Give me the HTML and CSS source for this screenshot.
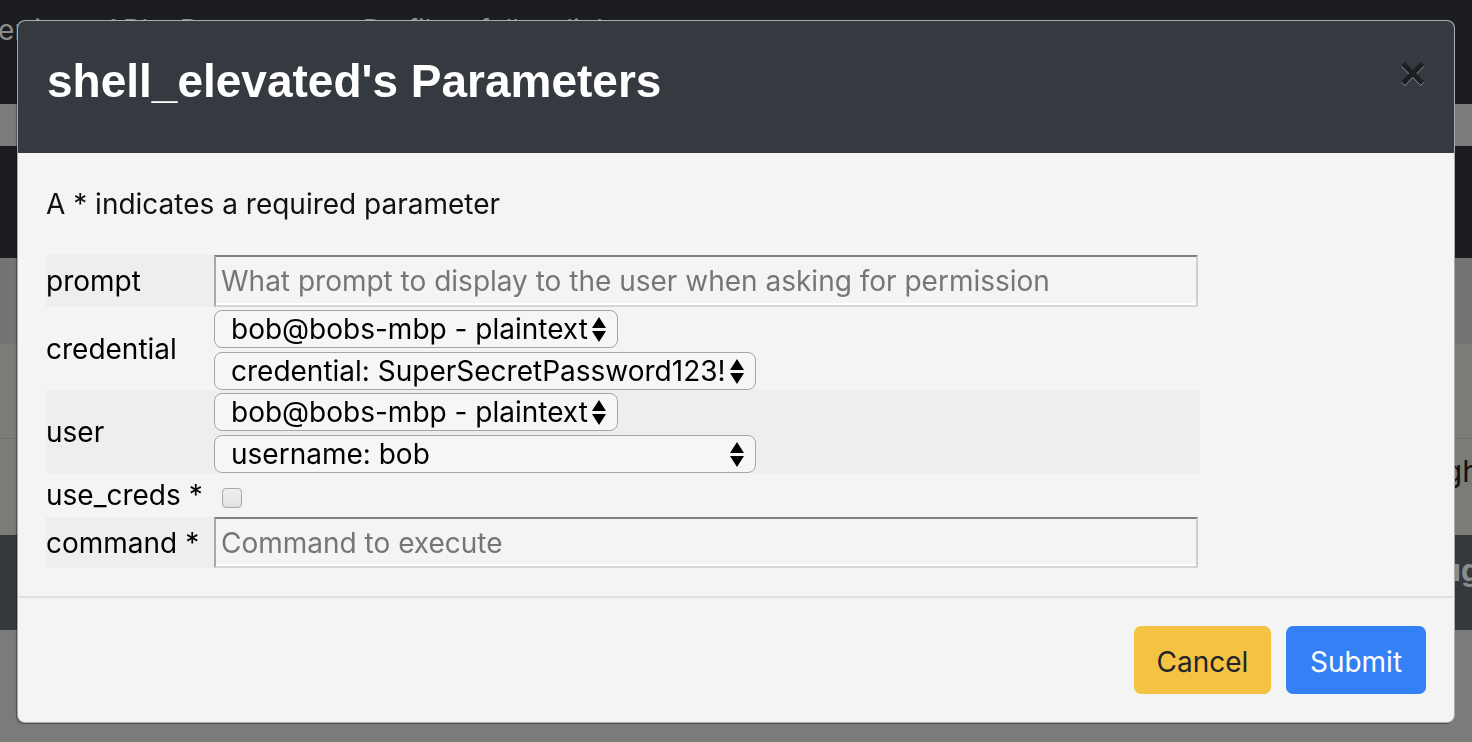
FILE: index.html
```html
<!DOCTYPE html>
<html lang="en">
<head>
<meta charset="utf-8">
<title>shell_elevated's Parameters</title>
<link rel="stylesheet" href="styles.css">
</head>
<body>
<div class="page">
  <div class="band band-top"><div class="nav-text">Properties&nbsp;&nbsp;&nbsp;&nbsp;API&nbsp;&nbsp;&nbsp;&nbsp;Parameters&nbsp;&nbsp;&nbsp;&nbsp;Profile&nbsp;&nbsp;&nbsp;&nbsp;follow link</div></div>
  <div class="band band-gray"></div>
  <div class="band band-dark"></div>
  <div class="band band-mid"></div>
  <div class="band band-green"></div>
  <div class="band band-green band-text band-text-a"><span class="right-text">through</span></div>
  <div class="band band-slate band-text band-text-b"><span class="right-text bold">Plug</span></div>
  <div class="band band-bottom"></div>
</div>

<div class="modal" role="dialog">
  <div class="modal-header">
    <h4 class="modal-title">shell_elevated's Parameters</h4>
    <button class="close" type="button" aria-label="Close">×</button>
  </div>
  <div class="modal-body">
    <p class="hint">A * indicates a required parameter</p>
    <table class="params">
      <tr class="row-prompt">
        <td class="label">prompt</td>
        <td class="field"><input class="text-input" type="text" placeholder="What prompt to display to the user when asking for permission"></td>
      </tr>
      <tr class="row-select">
        <td class="label">credential</td>
        <td class="field">
          <div class="select-stack">
            <select class="select short"><option>bob@bobs-mbp - plaintext</option></select>
            <select class="select long"><option>credential: SuperSecretPassword123!</option></select>
          </div>
        </td>
      </tr>
      <tr class="row-select">
        <td class="label">user</td>
        <td class="field">
          <div class="select-stack">
            <select class="select short"><option>bob@bobs-mbp - plaintext</option></select>
            <select class="select long"><option>username: bob</option></select>
          </div>
        </td>
      </tr>
      <tr class="row-check">
        <td class="label">use_creds *</td>
        <td class="field"><input class="checkbox" type="checkbox"></td>
      </tr>
      <tr class="row-command">
        <td class="label">command *</td>
        <td class="field"><input class="text-input" type="text" placeholder="Command to execute"></td>
      </tr>
    </table>
  </div>
  <div class="modal-footer">
    <button class="btn btn-cancel" type="button">Cancel</button>
    <button class="btn btn-submit" type="button">Submit</button>
  </div>
</div>
</body>
</html>
```
FILE: styles.css
```css
html, body {
  margin: 0;
  padding: 0;
  height: 100%;
}

body {
  font-family: Inter, "Noto Sans", "DejaVu Sans", sans-serif;
  background: #7b7b7b;
  overflow: hidden;
}

/* background page (dimmed) */
.page {
  display: flex;
  flex-direction: column;
}

.band {
  overflow: hidden;
}

.band-top {
  height: 104px;
  background: #1c1d20;
}

.nav-text {
  margin: 13px 0 0 -64px;
  font-size: 28px;
  color: #8c8c8c;
  white-space: nowrap;
}

.band-gray {
  height: 42px;
  background: #7b7b7b;
}

.band-dark {
  height: 112px;
  background: #1c1d20;
}

.band-mid {
  height: 86px;
  background: #737373;
}

.band-green {
  height: 94px;
  background: #7b7c77;
  border-bottom: 1px solid #6e6f6b;
}

.band-green.band-text {
  height: 96px;
  border-bottom: none;
}

.band-slate {
  height: 95px;
  background: #35393c;
}

.band-bottom {
  height: 112px;
  background: #7b7b7b;
}

.band-text {
  display: flex;
  align-items: flex-start;
  justify-content: flex-end;
}

.band-text-a {
  padding-top: 14px;
  box-sizing: border-box;
}

.band-text-b {
  padding-top: 17px;
  box-sizing: border-box;
}

.right-text {
  margin-right: -8px;
  font-size: 30px;
  color: #111;
  white-space: nowrap;
}

.right-text.bold {
  font-weight: 700;
  color: #8a8c8e;
  margin-right: -8px;
}

/* modal */
.modal {
  position: fixed;
  left: 17px;
  top: 20px;
  width: 1438px;
  height: 703px;
  box-sizing: border-box;
  border: 1px solid rgba(0, 0, 0, 0.3);
  border-radius: 8px;
  background: #f4f4f4;
  overflow: hidden;
  box-shadow: -1px 1px 1px rgba(0, 0, 0, 0.35);
  display: flex;
  flex-direction: column;
}

.modal-header {
  height: 132px;
  box-sizing: border-box;
  background: #343a40;
  padding: 33px 28px 0 29px;
  display: flex;
  justify-content: space-between;
  align-items: flex-start;
}

.modal-title {
  margin: 0;
  font-family: "Liberation Sans", Arial, sans-serif;
  font-weight: 700;
  font-size: 46px;
  line-height: 55px;
  color: #ffffff;
}

.close {
  margin-top: -5px;
  padding: 0;
  border: none;
  background: none;
  font-family: "Liberation Sans", Arial, sans-serif;
  font-weight: 700;
  font-size: 46px;
  line-height: 48px;
  color: #1c1e21;
  text-shadow: 0 1px 0 #8a8d90;
  cursor: pointer;
}

.modal-body {
  padding: 30px 28px 28px 28px;
}

.hint {
  margin: 0 0 30px 0;
  font-size: 28px;
  line-height: 42px;
  color: #111;
}

.params {
  border-collapse: collapse;
  width: 1154px;
}

.params td {
  padding: 0;
  vertical-align: middle;
}

.params tr:nth-child(odd) {
  background: #edeef0;
}

.params tr.row-prompt,
.params tr.row-command {
  background: transparent;
}

.params tr.row-prompt .label,
.params tr.row-command .label {
  background: #edeef0;
}

.label {
  width: 168px;
  box-sizing: border-box;
  padding: 0 0 0 5px;
  font-size: 28px;
  color: #000;
  white-space: nowrap;
}

.field {
  font-size: 0;
}

.text-input {
  width: 984px;
  height: 52px;
  box-sizing: border-box;
  border-style: solid;
  border-width: 2px;
  border-color: #7f7f7f #cfcfcf #d6d6d6 #a8a8a8;
  box-shadow: inset 0 -2px 0 #ffffff;
  background: #f4f4f4;
  padding: 0 0 0 5px;
  font-family: Inter, "Noto Sans", sans-serif;
  font-size: 28px;
  color: #000;
  outline: none;
}

.row-command .text-input {
  height: 51px;
}

.text-input::placeholder {
  color: #767676;
}

.select-stack {
  display: flex;
  flex-direction: column;
  align-items: flex-start;
  gap: 4px;
  padding: 3px 0 0 0;
}

.row-select:first-of-type .select-stack {
  padding-bottom: 1px;
}

.select {
  -webkit-appearance: none;
  appearance: none;
  height: 38px;
  box-sizing: border-box;
  border: 1px solid #a6a6a6;
  border-radius: 8px;
  background-color: #f6f6f6;
  background-image: url("data:image/svg+xml,%3Csvg xmlns='http://www.w3.org/2000/svg' width='14' height='25' viewBox='0 0 14 25'%3E%3Cpath d='M7 0L14 11H0Z M0 14H14L7 25Z' fill='%23000'/%3E%3C/svg%3E");
  background-repeat: no-repeat;
  background-position: right 11px center;
  background-size: 14px 25px;
  padding: 0 0 0 16px;
  font-family: Inter, "Noto Sans", sans-serif;
  font-size: 28px;
  color: #000;
  outline: none;
}

.select.short {
  width: 404px;
}

.select.long {
  width: 542px;
}

.row-check {
  height: 44px;
}

.checkbox {
  -webkit-appearance: none;
  appearance: none;
  width: 20px;
  height: 20px;
  margin: 6px 0 0 8px;
  box-sizing: border-box;
  border: 1px solid #a9a9a9;
  border-radius: 4px;
  background: linear-gradient(#f0f0f0, #e2e2e2);
  vertical-align: middle;
}

.modal-footer {
  border-top: 2px solid #dee2e6;
  padding: 28px 28px 28px 28px;
  display: flex;
  justify-content: flex-end;
  gap: 15px;
}

.btn {
  height: 68px;
  border: none;
  border-radius: 7px;
  font-family: Inter, "Noto Sans", sans-serif;
  font-size: 28px;
  line-height: 42px;
  padding: 3px 0 0 0;
  text-align: center;
  cursor: pointer;
}

.btn-cancel {
  width: 137px;
  background: #f5c343;
  color: #212529;
}

.btn-submit {
  width: 140px;
  background: #3381f4;
  color: #ffffff;
}
```
